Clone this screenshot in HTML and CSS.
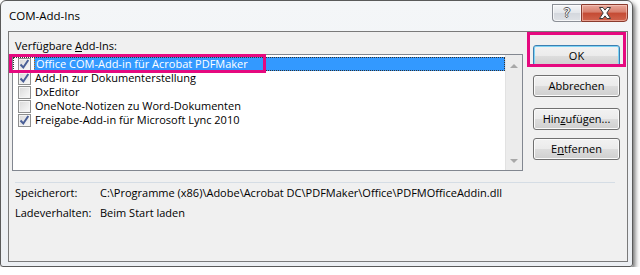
FILE: index.html
```html
<!DOCTYPE html>
<html lang="de">
<head>
<meta charset="utf-8">
<title>COM-Add-Ins</title>
<link rel="stylesheet" href="styles.css">
</head>
<body>
<div class="window">
  <div class="titlebar">
    <div class="title">COM-Add-Ins</div>
    <div class="caption">
      <div class="cap-help">?</div>
      <div class="cap-close"><svg width="16" height="12" viewBox="0 0 16 12"><path d="M2.5 0.5h3.5l2 2.6 2-2.6h3.5l-3.7 5.5 3.7 5.5h-3.5l-2-2.6-2 2.6H2.5l3.7-5.5z" fill="#fff" stroke="#3c3c3c" stroke-width="1"/></svg></div>
    </div>
  </div>
  <div class="client">
    <div class="top">
      <div class="left">
        <div class="label">Verfügbare <u>A</u>dd-Ins:</div>
        <div class="listbox">
          <div class="items">
            <div class="item selected"><span class="cb"><svg width="11" height="11" viewBox="0 0 11 11"><path d="M1.5 5.5l2.8 3 5-7.5" fill="none" stroke="#4a5f97" stroke-width="2"/></svg></span><span class="txt">Office COM-Add-in für Acrobat PDFMaker</span></div>
            <div class="item"><span class="cb"><svg width="11" height="11" viewBox="0 0 11 11"><path d="M1.5 5.5l2.8 3 5-7.5" fill="none" stroke="#4a5f97" stroke-width="2"/></svg></span><span class="txt">Add-In zur Dokumenterstellung</span></div>
            <div class="item"><span class="cb"></span><span class="txt">DxEditor</span></div>
            <div class="item"><span class="cb"></span><span class="txt">OneNote-Notizen zu Word-Dokumenten</span></div>
            <div class="item"><span class="cb"><svg width="11" height="11" viewBox="0 0 11 11"><path d="M1.5 5.5l2.8 3 5-7.5" fill="none" stroke="#4a5f97" stroke-width="2"/></svg></span><span class="txt">Freigabe-Add-in für Microsoft Lync 2010</span></div>
          </div>
          <div class="scrollbar"><span class="arr up"></span><span class="arr down"></span></div>
        </div>
      </div>
      <div class="buttons">
        <div class="btn default">OK</div>
        <div class="btn b2">Abbrechen</div>
        <div class="btn b3">Hin<u>z</u>ufügen...</div>
        <div class="btn b4">E<u>n</u>tfernen</div>
      </div>
    </div>
    <div class="sep"></div>
    <div class="info">
      <span>Speicherort:</span><span>C:\Programme (x86)\Adobe\Acrobat DC\PDFMaker\Office\PDFMOfficeAddin.dll</span>
      <span>Ladeverhalten:</span><span>Beim Start laden</span>
    </div>
  </div>
  <div class="mark mark-row"></div>
  <div class="mark mark-ok"></div>
</div>
</body>
</html>
```

FILE: styles.css
```css
html, body {
  margin: 0;
  padding: 0;
  background: #ffffff;
}
body {
  font-family: "Open Sans", "Noto Sans", sans-serif;
  font-size: 11px;
  color: #000;
}
.window {
  position: relative;
  box-sizing: border-box;
  width: 633px;
  height: 267px;
  border: 1px solid #5a5a5a;
  border-radius: 6px 6px 3px 3px;
  background: linear-gradient(#f4f6f8, #eceff3);
  box-shadow: 2px 3px 5px rgba(0, 0, 0, 0.6);
  padding: 0 4px 4px 7px;
  display: flex;
  flex-direction: column;
}
.titlebar {
  height: 30px;
  display: flex;
  justify-content: space-between;
  align-items: flex-start;
}
.title {
  margin-top: 7px;
  padding-left: 1px;
  line-height: 16px;
  font-size: 11.5px;
}
.caption {
  display: flex;
  margin-top: 3px;
}
.cap-help {
  box-sizing: border-box;
  width: 29px;
  height: 18px;
  border: 1px solid #8b8f96;
  border-right: none;
  border-radius: 0 0 0 4px;
  background: linear-gradient(#f5f6f8 0%, #e3e6ea 50%, #d3d7dd 50%, #dfe2e6 100%);
  box-shadow: inset 0 0 0 1px rgba(255,255,255,0.7);
  text-align: center;
  font-family: "DejaVu Sans", sans-serif;
  font-size: 13px;
  line-height: 16px;
  color: #fff;
  text-shadow: -1px 0 #555, 1px 0 #555, 0 -1px #555, 0 1px #555;
}
.cap-close {
  box-sizing: border-box;
  width: 47px;
  height: 18px;
  border: 1px solid #8a3b2e;
  border-radius: 0 0 4px 0;
  background: linear-gradient(#e9a99b 0%, #d77e6c 45%, #c44a33 50%, #d0644d 100%);
  box-shadow: inset 0 0 0 1px rgba(255,220,210,0.5);
  display: flex;
  align-items: center;
  justify-content: center;
}
.client {
  flex: 1;
  border: 1px solid #7a7a7a;
  background: #f0f0f0;
  padding: 6px 7px 0 3px;
  display: flex;
  flex-direction: column;
}
.top {
  display: flex;
}
.left {
  width: 511px;
}
.label {
  line-height: 16px;
  padding-left: 3px;
}
.listbox {
  box-sizing: border-box;
  height: 117px;
  border: 1px solid #828790;
  background: #fff;
  display: flex;
}
.items {
  flex: 1;
  padding-top: 2px;
}
.item {
  box-sizing: border-box;
  height: 14px;
  display: flex;
  align-items: center;
  white-space: nowrap;
}
.item.selected {
  outline: 1px dotted #333;
  outline-offset: -1px;
}
.cb {
  box-sizing: border-box;
  width: 13px;
  height: 13px;
  margin-left: 5px;
  border: 1px solid #8e8f8f;
  background: linear-gradient(135deg, #d8d8d8, #fafafa);
  box-shadow: inset 0 0 0 1px #f4f4f4;
  display: flex;
  align-items: center;
  justify-content: center;
}
.txt {
  margin-left: 3px;
  padding-left: 1px;
  line-height: 14px;
}
.item.selected .txt {
  flex: 1;
  align-self: stretch;
  box-sizing: border-box;
  background: #3399ff;
  color: #fff;
  border: 1px dotted #cc6600;
  line-height: 12px;
}
.scrollbar {
  width: 17px;
  background: #ececec;
  border-left: 1px solid #e2e2e2;
  box-sizing: border-box;
  display: flex;
  flex-direction: column;
  justify-content: space-between;
  align-items: center;
  padding: 9px 0 7px;
}
.arr {
  width: 0;
  height: 0;
  border-left: 4px solid transparent;
  border-right: 4px solid transparent;
}
.arr.up {
  border-bottom: 4px solid #a8a8a8;
}
.arr.down {
  border-top: 4px solid #a8a8a8;
}
.buttons {
  margin-left: 10px;
  width: 87px;
  display: flex;
  flex-direction: column;
  padding-top: 7px;
}
.btn {
  box-sizing: border-box;
  height: 22px;
  border: 1px solid #707070;
  border-radius: 3px;
  background: linear-gradient(#f2f2f2 0%, #ebebeb 50%, #dddddd 50%, #cfcfcf 100%);
  box-shadow: inset 0 0 0 1px #fbfbfb;
  text-align: center;
  line-height: 20px;
}
.btn.default {
  border-color: #3c7fb1;
  box-shadow: inset 0 0 0 1px #7fd4f5;
}
.b2 { margin-top: 8px; }
.b3 { margin-top: 11px; }
.b4 { margin-top: 8px; }
.sep {
  margin: 11px 5px 0 3px;
  border-top: 1px solid #d5dde5;
}
.info {
  display: grid;
  grid-template-columns: 85px 1fr;
  padding-left: 3px;
  line-height: 20px;
}
.mark {
  position: absolute;
  box-sizing: border-box;
  border: 3px solid #e5097f;
}
.mark-row {
  left: 8px;
  top: 53px;
  width: 257px;
  height: 19px;
}
.mark-ok {
  left: 526px;
  top: 31px;
  width: 99px;
  height: 35px;
}
```
